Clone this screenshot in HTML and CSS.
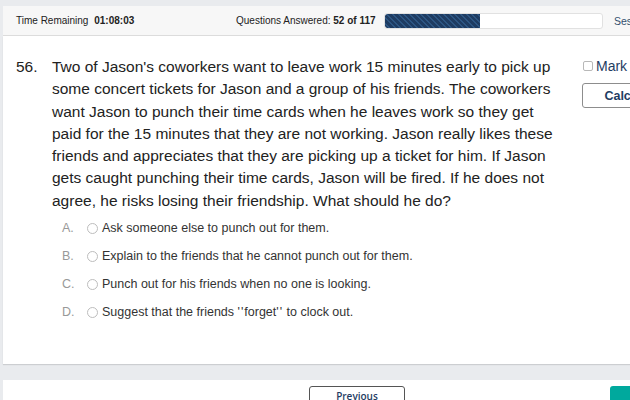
FILE: index.html
```html
<!DOCTYPE html>
<html lang="en">
<head>
<meta charset="utf-8">
<title>Exam</title>
<link rel="stylesheet" href="styles.css">
</head>
<body>
<div class="page">
  <header class="topbar">
    <div class="time"><span>Time Remaining</span> <b>01:08:03</b></div>
    <div class="answered">Questions Answered: <b>52 of 117</b></div>
    <div class="progress"><div class="fill" style="width:44%"></div></div>
    <a class="session">Session Timer</a>
  </header>
  <main class="card">
    <div class="question">
      <div class="qbody">
        <div class="qtext">
          <span class="num">56.</span>
          <p>Two of Jason's coworkers want to leave work 15 minutes early to pick up some concert tickets for Jason and a group of his friends. The coworkers want Jason to punch their time cards when he leaves work so they get paid for the 15 minutes that they are not working. Jason really likes these friends and appreciates that they are picking up a ticket for him. If Jason gets caught punching their time cards, Jason will be fired. If he does not agree, he risks losing their friendship. What should he do?</p>
        </div>
        <ul class="options">
          <li><span class="letter">A.</span><span class="radio"></span><span class="opt">Ask someone else to punch out for them.</span></li>
          <li><span class="letter">B.</span><span class="radio"></span><span class="opt">Explain to the friends that he cannot punch out for them.</span></li>
          <li><span class="letter">C.</span><span class="radio"></span><span class="opt">Punch out for his friends when no one is looking.</span></li>
          <li><span class="letter">D.</span><span class="radio"></span><span class="opt">Suggest that the friends <span class="q">''</span>forget<span class="q">''</span> to clock out.</span></li>
        </ul>
      </div>
      <aside class="side">
        <label class="mark"><span class="box"></span>Mark for review</label>
        <button class="calc">Calculator</button>
      </aside>
    </div>
  </main>
  <footer class="nav">
    <button class="prev">Previous</button>
    <button class="next">Next</button>
  </footer>
</div>
</body>
</html>
```
FILE: styles.css
```css
html, body {
  margin: 0;
  padding: 0;
  background: #e9ebee;
  overflow: hidden;
}
body {
  width: 630px;
  height: 400px;
  font-family: "Liberation Sans", Arial, sans-serif;
  color: #222;
}
.page {
  width: 760px;
  padding-left: 3px;
  padding-top: 6px;
}
.topbar {
  height: 29px;
  background: #f7f7f7;
  border-bottom: 1px solid #dcdcdc;
  display: flex;
  align-items: center;
  padding-left: 13px;
  font-size: 10px;
  color: #222;
}
.time {
  width: 220px;
  flex: none;
}
.time b { margin-left: 3px; }
.answered {
  width: 148px;
  flex: none;
  white-space: nowrap;
}
.progress {
  width: 217px;
  height: 14px;
  flex: none;
  background: #fff;
  border: 1px solid #e1e1e1;
  border-radius: 3px;
  overflow: hidden;
}
.fill {
  height: 100%;
  background: repeating-linear-gradient(45deg, #1e3c62 0px, #1e3c62 2.5px, #2d5683 2.5px, #2d5683 4px);
  border-radius: 2px 0 0 2px;
}
.session {
  margin-left: 11px;
  color: #33506e;
  font-size: 10.5px;
  white-space: nowrap;
}
.card {
  height: 328px;
  background: #fff;
  box-shadow: 0 1px 1px rgba(0,0,0,0.12);
}
.question {
  display: flex;
  padding: 20px 0 0 13px;
}
.qbody {
  width: 541px;
  flex: none;
}
.qtext {
  display: flex;
  font-size: 15.5px;
  line-height: 22.3px;
  color: #222;
}
.num {
  width: 36px;
  flex: none;
}
.qtext p {
  margin: 0;
  width: 507px;
}
.options {
  list-style: none;
  margin: 2px 0 0 0;
  padding: 0 0 0 46px;
}
.options li {
  height: 28px;
  display: flex;
  align-items: center;
  font-size: 12.5px;
}
.letter {
  width: 25px;
  color: #999;
}
.radio {
  width: 9px;
  height: 9px;
  border: 1px solid #bdbdbd;
  border-radius: 50%;
  background: #fff;
  margin-right: 4px;
  flex: none;
}
.opt { color: #333; }
.q { letter-spacing: 1px; }
.side {
  margin-left: 25px;
  padding-top: 1px;
  display: flex;
  flex-direction: column;
  align-items: flex-start;
}
.mark {
  display: flex;
  align-items: center;
  font-size: 14px;
  color: #1f3d63;
  height: 17px;
  white-space: nowrap;
}
.box {
  width: 8px;
  height: 8px;
  border: 1px solid #b8b8b8;
  border-radius: 2px;
  margin-right: 3px;
  margin-left: 1px;
  flex: none;
}
.calc {
  margin-top: 9px;
  width: 106px;
  height: 25px;
  background: #fff;
  border: 1px solid #8d8d8d;
  border-radius: 3px;
  font-family: "Liberation Sans", Arial, sans-serif;
  font-weight: bold;
  font-size: 12.5px;
  color: #1f3d63;
}
.nav {
  margin-top: 16px;
  height: 60px;
  background: #fff;
  display: flex;
  align-items: flex-start;
  padding-top: 6px;
  padding-left: 306px;
}
.prev {
  width: 96px;
  height: 26px;
  background: #fff;
  border: 1px solid #555;
  border-radius: 3px;
  font-family: "Open Sans", sans-serif;
  font-weight: 600;
  font-size: 10px;
  color: #1f3d63;
  padding: 0;
  padding-bottom: 6px;
}
.next {
  margin-left: 205px;
  width: 96px;
  height: 26px;
  background: #00a99d;
  border: none;
  border-radius: 3px;
  color: #fff;
  font-family: "Open Sans", sans-serif;
  font-weight: 600;
  font-size: 10px;
}
```
